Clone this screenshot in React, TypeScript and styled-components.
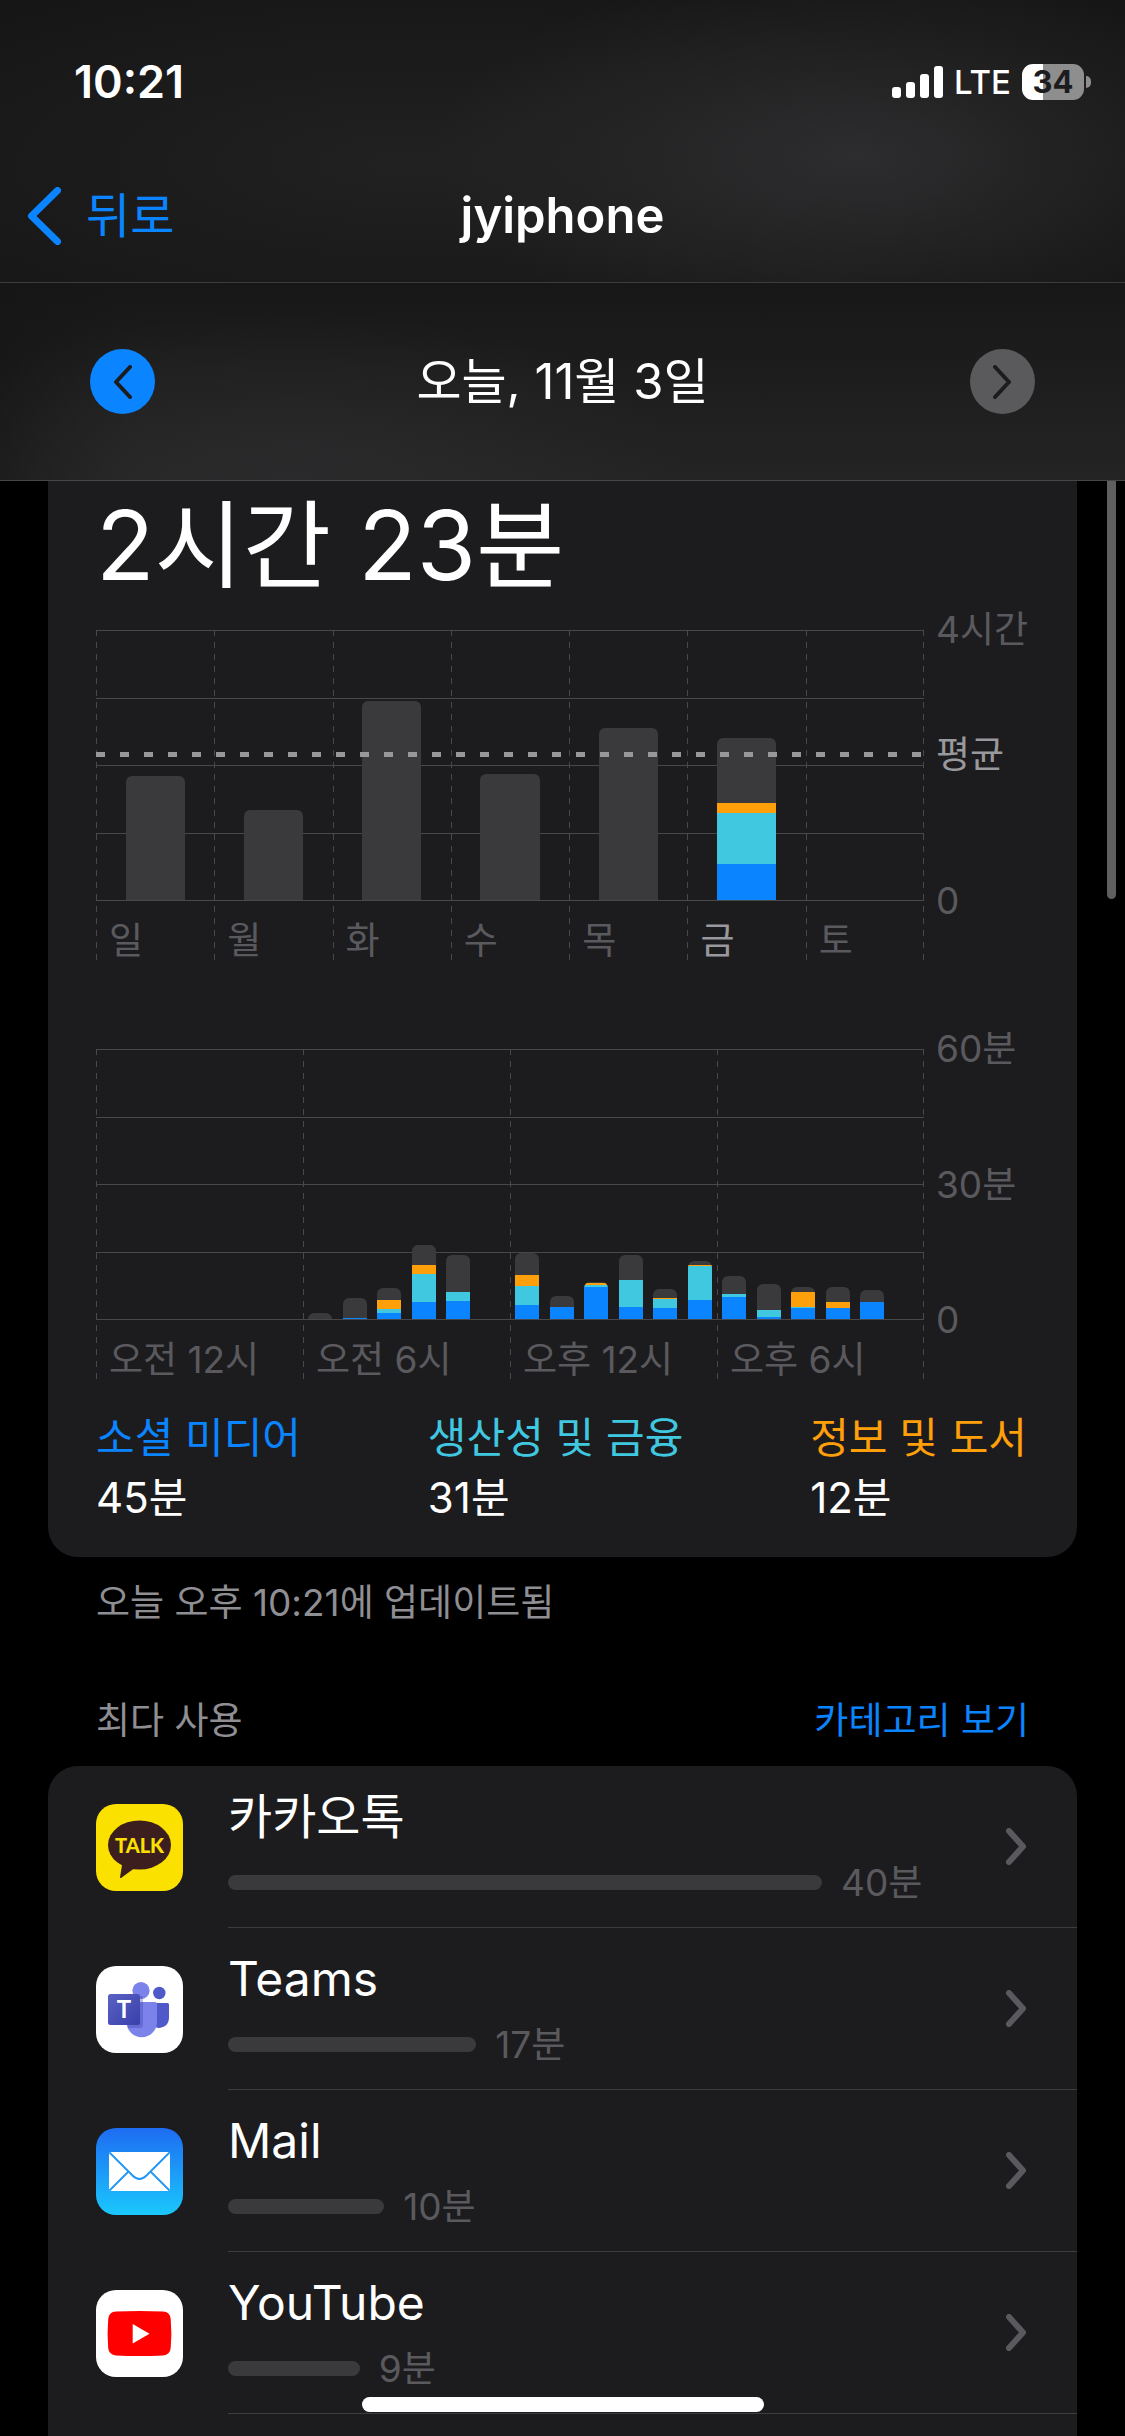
import React from "react";
import styled, { createGlobalStyle } from "styled-components";

const color = {
  blue: "#0a84ff",
  teal: "#40c8e0",
  orange: "#ff9f0a",
  rest: "#3a3a3c",
  card: "#1c1c1e",
  grid: "#48484a",
  dim: "#5a5a5e",
  muted: "#8e8e93",
};

const GlobalStyle = createGlobalStyle`
  *, *::before, *::after { box-sizing: border-box; }
  body {
    margin: 0;
    background: #000;
    color: #fff;
    font-family: Inter, "Noto Sans CJK KR", sans-serif;
    font-size: 48px;
    line-height: 60px;
  }
  h1, h2, p, ul, dl, dd, dt { margin: 0; padding: 0; font-weight: 400; font-size: inherit; }
  button { font: inherit; border: 0; background: none; padding: 0; cursor: pointer; }
  a { color: inherit; text-decoration: none; }
  svg { display: block; }
`;

const Screen = styled.div`
  position: relative;
  min-height: 100vh;
  display: flex;
  flex-direction: column;
`;

/* ---------- header ---------- */

const Header = styled.header`
  border-bottom: 1px solid #464648;
`;

const TopArea = styled.div`
  border-bottom: 1px solid #3c3c3e;
  background:
    radial-gradient(ellipse 430px 190px at 76% 56%, rgba(46, 46, 48, 0.95), rgba(46, 46, 48, 0) 100%),
    radial-gradient(ellipse 620px 200px at 36% 58%, rgba(34, 34, 35, 0.9), rgba(34, 34, 35, 0) 100%),
    #161616;
`;

const StatusBar = styled.div`
  display: flex;
  align-items: center;
  justify-content: space-between;
  height: 150px;
  padding: 14px 34px 0 74px;
`;

const Clock = styled.time`
  font-size: 45px;
  font-weight: 600;
`;

const StatusIcons = styled.div`
  display: flex;
  align-items: center;
  gap: 11px;
`;

const Network = styled.span`
  font-size: 33px;
  font-weight: 500;
`;

const Battery = styled.div`
  display: flex;
  align-items: center;
  gap: 2px;
`;

const BatteryBody = styled.div<{ $level: number }>`
  width: 62px;
  height: 36px;
  border-radius: 11px;
  background: linear-gradient(to right, #fff ${(p) => p.$level}%, #8e8e8e ${(p) => p.$level}%);
  color: #1c1c1e;
  font-size: 31px;
  line-height: 36px;
  font-weight: 700;
  text-align: center;
`;

const BatteryTip = styled.div`
  width: 5px;
  height: 12px;
  border-radius: 0 6px 6px 0;
  background: #8e8e8e;
`;

const NavBar = styled.nav`
  display: grid;
  grid-template-columns: 1fr auto 1fr;
  align-items: center;
  height: 132px;
  padding: 0 27px;
`;

const BackButton = styled.button`
  display: flex;
  align-items: center;
  gap: 25px;
  color: ${color.blue};
`;

const Title = styled.h1`
  && {
    font-size: 49px;
    font-weight: 600;
  }
`;

const DateBar = styled.div`
  display: flex;
  align-items: center;
  justify-content: space-between;
  height: 197px;
  padding: 0 90px;
  font-size: 49px;
  background:
    radial-gradient(ellipse 400px 170px at 26% 100%, rgba(44, 44, 46, 0.8), rgba(44, 44, 46, 0) 100%),
    linear-gradient(to right, rgba(22, 22, 22, 0.8), rgba(22, 22, 22, 0) 12%),
    linear-gradient(#171717, #242424);
`;

const RoundButton = styled.button<{ $off?: boolean }>`
  display: grid;
  place-items: center;
  width: 65px;
  height: 65px;
  border-radius: 50%;
  color: #1c1c1e;
  background: ${(p) => (p.$off ? "#5a5a5d" : color.blue)};
`;

/* ---------- content ---------- */

const Main = styled.main`
  position: relative;
  flex: 1;
  display: flex;
  flex-direction: column;
  padding: 0 48px;
`;

const ScrollThumb = styled.div`
  position: absolute;
  top: 0;
  right: 9px;
  width: 9px;
  height: 418px;
  border-radius: 0 0 5px 5px;
  background: #5f5f5f;
`;

const SummaryCard = styled.section`
  display: flex;
  flex-direction: column;
  padding: 14px 48px 29px;
  border-radius: 0 0 30px 30px;
  background: ${color.card};
`;

const Total = styled.h2`
  && {
    margin-bottom: 35px;
    font-size: 96px;
  }
  line-height: 100px;
`;

const Chart = styled.div`
  display: grid;
  grid-template-columns: 1fr 105px;
  grid-template-rows: 271px 59px;
  font-size: 37px;
  line-height: 38px;
  color: ${color.dim};

  & + & { margin-top: 89px; }
`;

const dashes = `repeating-linear-gradient(${color.grid} 0 6px, transparent 6px 12px)`;

const Columns = styled.div<{ $count: number }>`
  grid-area: 1 / 1 / 3 / 2;
  display: grid;
  grid-template-columns: repeat(${(p) => p.$count}, 1fr);
  background: ${dashes} right / 1px 100% no-repeat;
`;

const Column = styled.div<{ $current?: boolean }>`
  display: flex;
  align-items: flex-end;
  padding-left: 13px;
  white-space: nowrap;
  background: ${dashes} left / 1px 100% no-repeat;
  color: ${(p) => (p.$current ? "#98989d" : "inherit")};
`;

const GridLines = styled.div`
  grid-area: 1 / 1;
  display: flex;
  flex-direction: column;
  justify-content: space-between;
`;

const GridLine = styled.div`
  height: 1px;
  background: ${color.grid};
`;

const Bars = styled.div<{ $count: number }>`
  position: relative;
  grid-area: 1 / 1;
  display: grid;
  grid-template-columns: repeat(${(p) => p.$count}, 1fr);
  align-items: end;
  justify-items: center;
  padding-bottom: 1px;
`;

const Bar = styled.div<{ $width: number }>`
  display: flex;
  flex-direction: column;
  width: ${(p) => p.$width}%;
  border-radius: 6px 6px 0 0;
  overflow: hidden;
`;

const Segment = styled.div<{ $fill: string }>`
  background: ${(p) => p.$fill};
`;

const AverageLine = styled.div`
  position: absolute;
  left: 0;
  right: 0;
  height: 5px;
  background: repeating-linear-gradient(to right, #98989a 0 9px, transparent 9px 24px);
`;

const Axis = styled.div`
  grid-area: 1 / 2;
  display: flex;
  flex-direction: column;
  padding-left: 12px;
`;

const AxisLabel = styled.div<{ $bright?: boolean }>`
  display: flex;
  align-items: center;
  height: 0;
  white-space: nowrap;
  color: ${(p) => (p.$bright ? "#98989d" : "inherit")};
`;

const Spacer = styled.div``;

const Legend = styled.dl`
  display: flex;
  justify-content: space-between;
  padding-right: 2px;
  && {
    margin-top: 29px;
    font-size: 42px;
  }
`;

const LegendName = styled.dt<{ $tint: string }>`
  color: ${(p) => p.$tint};
`;

const Note = styled.p`
  && {
    margin-top: 21px;
    padding: 0 48px;
    font-size: 37px;
  }
  line-height: 50px;
  color: ${color.muted};
`;

const ListHeader = styled.div`
  display: flex;
  justify-content: space-between;
  margin: 68px 0 20px;
  padding: 0 48px;
  font-size: 37px;
  line-height: 50px;
  color: ${color.muted};
`;

const CategoryLink = styled.a`
  color: ${color.blue};
`;

const AppList = styled.ul`
  flex: 1;
  list-style: none;
  border-radius: 30px 30px 0 0;
  background: ${color.card};
`;

const Row = styled.a`
  display: flex;
  align-items: center;
  gap: 45px;
  padding-left: 48px;
`;

const RowBody = styled.div`
  flex: 1;
  display: flex;
  align-items: center;
  height: 162px;
  padding-right: 50px;
  border-bottom: 1px solid #3d3d40;
  color: ${color.dim};
`;

const Usage = styled.div`
  flex: 1;
  display: grid;
  gap: 12px;
`;

const AppName = styled.span`
  color: #fff;
`;

const Meter = styled.div`
  display: flex;
  align-items: center;
  gap: 19px;
  font-size: 37px;
  line-height: 48px;
`;

const MeterBar = styled.div`
  height: 15px;
  border-radius: 8px;
  background: ${color.rest};
`;

const HomeIndicator = styled.div`
  position: absolute;
  left: 50%;
  bottom: 24px;
  width: 402px;
  height: 15px;
  margin-left: -201px;
  border-radius: 8px;
  background: #fff;
`;

/* ---------- drawings ---------- */

type ChevronProps = { width: number; height: number; stroke: number; dir: "left" | "right" };

function Chevron({ width, height, stroke, dir }: ChevronProps) {
  const s = stroke / 2;
  const near = dir === "left" ? width - s : s;
  const tip = dir === "left" ? s + 1 : width - s - 1;
  return (
    <svg width={width} height={height} fill="none" stroke="currentColor" strokeWidth={stroke} strokeLinecap="round" strokeLinejoin="round" aria-hidden="true">
      <path d={`M${near} ${s}L${tip} ${height / 2}L${near} ${height - s}`} />
    </svg>
  );
}

function Signal() {
  return (
    <svg width="51" height="32" fill="#fff" aria-hidden="true">
      {[11, 16, 24, 32].map((h, i) => (
        <rect key={h} x={i * 14} y={32 - h} width="9" height={h} rx="3" />
      ))}
    </svg>
  );
}

function KakaoIcon() {
  return (
    <svg width="87" height="87" viewBox="0 0 87 87" aria-hidden="true">
      <rect width="87" height="87" rx="20" fill="#fae100" />
      <ellipse cx="43.5" cy="41" rx="31.5" ry="24.5" fill="#3c1e1e" />
      <path d="M26.5 58L24 73.5q.3 1 1.4.3L40 63z" fill="#3c1e1e" />
      <text x="43.5" y="49" textAnchor="middle" fontFamily="Lato, sans-serif" fontWeight="900" fontSize="20" fill="#fae100">TALK</text>
    </svg>
  );
}

function TeamsIcon() {
  return (
    <svg width="87" height="87" viewBox="0 0 87 87" aria-hidden="true">
      <defs>
        <linearGradient id="teams-tile" x1="0" y1="0" x2="1" y2="1">
          <stop offset="0" stopColor="#5a62c3" />
          <stop offset="1" stopColor="#3940ab" />
        </linearGradient>
      </defs>
      <rect width="87" height="87" rx="20" fill="#fff" />
      <circle cx="63.3" cy="27" r="6.2" fill="#5059c9" />
      <path d="M56 37H71.5q1.5 0 1.5 1.5V52a10 10 0 0 1-17 7z" fill="#5059c9" />
      <circle cx="45" cy="24.5" r="8.6" fill="#7b83eb" />
      <path d="M30.5 36H59q2 0 2 2V56a15.2 15.2 0 0 1-30.5 0z" fill="#7b83eb" />
      <path d="M34 30H46q1 0 1 1V59q0 3-3 3H32z" fill="#3940ab" opacity=".35" />
      <rect x="12" y="28" width="32" height="31" rx="2.5" fill="url(#teams-tile)" />
      <text x="28" y="52" textAnchor="middle" fontFamily="Lato, sans-serif" fontWeight="700" fontSize="24" fill="#fff">T</text>
    </svg>
  );
}

function MailIcon() {
  return (
    <svg width="87" height="87" viewBox="0 0 87 87" aria-hidden="true">
      <defs>
        <linearGradient id="mail-sky" x1="0" y1="0" x2="0" y2="1">
          <stop offset="0" stopColor="#1e6cf2" />
          <stop offset="1" stopColor="#1ac8fd" />
        </linearGradient>
      </defs>
      <rect width="87" height="87" rx="20" fill="url(#mail-sky)" />
      <rect x="13" y="24" width="61" height="39" rx="2" fill="#fff" />
      <g fill="none" stroke="#2196f7" strokeWidth="1.8">
        <path d="M13.5 24.5L36.5 47.5q7 7 14 0L73.5 24.5" />
        <path d="M13.5 62.5L32.5 43.5M73.5 62.5L54.5 43.5" />
      </g>
    </svg>
  );
}

function YouTubeIcon() {
  return (
    <svg width="87" height="87" viewBox="0 0 87 87" aria-hidden="true">
      <rect width="87" height="87" rx="20" fill="#fff" />
      <path d="M20 21.6Q43.5 20.4 67 21.6Q74 22 74.7 29Q76 43.5 74.7 58Q74 65 67 65.4Q43.5 66.6 20 65.4Q13 65 12.2 58Q11 43.5 12.2 29Q13 22 20 21.6z" fill="#f00" />
      <path d="M36.7 34V53.5L53.5 43.7z" fill="#fff" />
    </svg>
  );
}

/* ---------- data ---------- */

/* Cumulative tops of the stacked segments, in units of the plot height. */
type Stack = { total: number; orange?: number; teal?: number; blue?: number };

const SCALE = 270;

const week: Stack[] = [
  { total: 124 },
  { total: 90 },
  { total: 199 },
  { total: 126 },
  { total: 172 },
  { total: 162, orange: 97, teal: 87, blue: 36 },
  { total: 0 },
];

const none: Stack = { total: 0 };

const hours: Stack[] = [
  none, none, none, none, none, none,
  { total: 6 },
  { total: 21, blue: 1 },
  { total: 31, orange: 19, teal: 10, blue: 6 },
  { total: 74, orange: 54, teal: 45, blue: 17 },
  { total: 64, teal: 27, blue: 18 },
  none,
  { total: 66, orange: 44, teal: 33, blue: 14 },
  { total: 23, blue: 12 },
  { total: 37, orange: 36, teal: 34, blue: 32 },
  { total: 64, teal: 39, blue: 12 },
  { total: 30, orange: 21, teal: 20, blue: 11 },
  { total: 58, orange: 54, teal: 53, blue: 19 },
  { total: 43, teal: 25, blue: 22 },
  { total: 35, teal: 9, blue: 2 },
  { total: 32, orange: 27, teal: 12, blue: 11 },
  { total: 32, orange: 17, blue: 11 },
  { total: 29, blue: 17 },
  none,
];

const legend = [
  { name: "소셜 미디어", value: "45분", tint: color.blue },
  { name: "생산성 및 금융", value: "31분", tint: color.teal },
  { name: "정보 및 도서", value: "12분", tint: color.orange },
];

const apps = [
  { name: "카카오톡", time: "40분", share: 1, Icon: KakaoIcon },
  { name: "Teams", time: "17분", share: 0.418, Icon: TeamsIcon },
  { name: "Mail", time: "10분", share: 0.263, Icon: MailIcon },
  { name: "YouTube", time: "9분", share: 0.222, Icon: YouTubeIcon },
];

/* ---------- charts ---------- */

function StackedBar({ data, width }: { data: Stack; width: number }) {
  const blue = data.blue ?? 0;
  const teal = data.teal ?? blue;
  const orange = data.orange ?? teal;
  const parts: [string, number][] = [
    [color.rest, data.total - orange],
    [color.orange, orange - teal],
    [color.teal, teal - blue],
    [color.blue, blue],
  ];
  return (
    <Bar $width={width} style={{ height: `${(data.total / SCALE) * 100}%` }}>
      {parts
        .filter(([, size]) => size > 0)
        .map(([fill, size]) => (
          <Segment key={fill} $fill={fill} style={{ flexGrow: size }} />
        ))}
    </Bar>
  );
}

type AxisMark = { label: string; at: number; bright?: boolean };

type ChartProps = {
  name: string;
  data: Stack[];
  barWidth: number;
  ticks: string[];
  current?: number;
  marks: AxisMark[];
  average?: number;
};

function UsageChart({ name, data, barWidth, ticks, current, marks, average }: ChartProps) {
  return (
    <Chart role="group" aria-label={name}>
      <Columns $count={ticks.length}>
        {ticks.map((tick, i) => (
          <Column key={tick} $current={i === current}>
            {tick}
          </Column>
        ))}
      </Columns>
      <GridLines>
        {[0, 1, 2, 3, 4].map((n) => (
          <GridLine key={n} />
        ))}
      </GridLines>
      <Bars $count={data.length}>
        {data.map((stack, i) => (
          <StackedBar key={i} data={stack} width={barWidth} />
        ))}
        {average !== undefined && <AverageLine style={{ bottom: `${average * 100}%` }} />}
      </Bars>
      <Axis>
        {marks.map((mark, i) => (
          <React.Fragment key={mark.label}>
            {i > 0 && <Spacer style={{ flexGrow: marks[i - 1].at - mark.at }} />}
            <AxisLabel $bright={mark.bright}>{mark.label}</AxisLabel>
          </React.Fragment>
        ))}
      </Axis>
    </Chart>
  );
}

export default function App() {
  return (
    <Screen>
      <GlobalStyle />
      <Header>
        <TopArea>
          <StatusBar>
            <Clock>10:21</Clock>
            <StatusIcons>
              <Signal />
              <Network>LTE</Network>
              <Battery>
                <BatteryBody $level={34}>34</BatteryBody>
                <BatteryTip />
              </Battery>
            </StatusIcons>
          </StatusBar>
          <NavBar>
            <BackButton type="button">
              <Chevron width={34} height={58} stroke={7} dir="left" />
              뒤로
            </BackButton>
            <Title>jyiphone</Title>
          </NavBar>
        </TopArea>
        <DateBar>
          <RoundButton type="button" aria-label="이전 날">
            <Chevron width={19} height={34} stroke={4} dir="left" />
          </RoundButton>
          <span>오늘, 11월 3일</span>
          <RoundButton type="button" aria-label="다음 날" $off disabled>
            <Chevron width={19} height={34} stroke={4} dir="right" />
          </RoundButton>
        </DateBar>
      </Header>

      <Main>
        <SummaryCard>
          <Total>2시간 23분</Total>
          <UsageChart
            name="주간 사용 시간"
            data={week}
            barWidth={50}
            ticks={["일", "월", "화", "수", "목", "금", "토"]}
            current={5}
            average={0.53}
            marks={[
              { label: "4시간", at: 100 },
              { label: "평균", at: 54, bright: true },
              { label: "0", at: 0 },
            ]}
          />
          <UsageChart
            name="시간별 사용 시간"
            data={hours}
            barWidth={70}
            ticks={["오전 12시", "오전 6시", "오후 12시", "오후 6시"]}
            marks={[
              { label: "60분", at: 100 },
              { label: "30분", at: 50 },
              { label: "0", at: 0 },
            ]}
          />
          <Legend>
            {legend.map((item) => (
              <div key={item.name}>
                <LegendName $tint={item.tint}>{item.name}</LegendName>
                <dd>{item.value}</dd>
              </div>
            ))}
          </Legend>
        </SummaryCard>
        <Note>오늘 오후 10:21에 업데이트됨</Note>

        <ListHeader>
          <h2>최다 사용</h2>
          <CategoryLink href="#categories">카테고리 보기</CategoryLink>
        </ListHeader>
        <AppList>
          {apps.map(({ name, time, share, Icon }) => (
            <li key={name}>
              <Row href="#app">
                <Icon />
                <RowBody>
                  <Usage>
                    <AppName>{name}</AppName>
                    <Meter>
                      <MeterBar style={{ width: `calc((100% - 184px) * ${share})` }} />
                      {time}
                    </Meter>
                  </Usage>
                  <Chevron width={21} height={37} stroke={6} dir="right" />
                </RowBody>
              </Row>
            </li>
          ))}
        </AppList>
        <ScrollThumb />
      </Main>
      <HomeIndicator />
    </Screen>
  );
}
